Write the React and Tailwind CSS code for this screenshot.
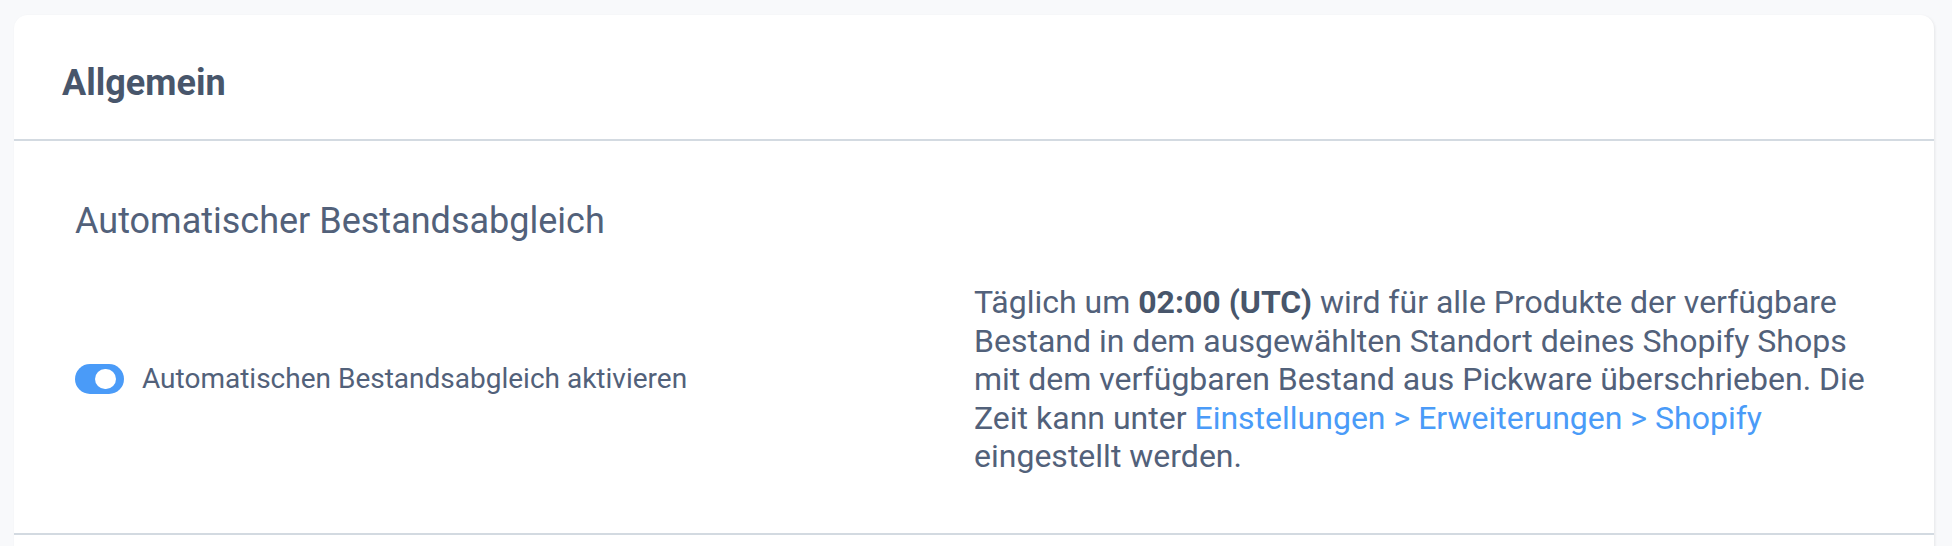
import React, { useState } from "react";

function Toggle({ checked, onChange }) {
  return (
    <button
      type="button"
      onClick={() => onChange(!checked)}
      className={
        checked
          ? "flex h-[30px] w-[49px] shrink-0 items-center justify-end rounded-full bg-[#4a9bf8] pr-[8px]"
          : "flex h-[30px] w-[49px] shrink-0 items-center justify-start rounded-full bg-[#cbd5e0] pl-[8px]"
      }
    >
      <span className="block h-[20px] w-[21px] rounded-full bg-white" />
    </button>
  );
}

export default function App() {
  const [autoSync, setAutoSync] = useState(true);

  return (
    <div
      className="min-h-screen bg-[#f8f9fb] pl-[14px] pr-[18px] pt-[15px] text-[#52617a]"
      style={{ fontFamily: "Roboto, 'Liberation Sans', sans-serif" }}
    >
      <div className="rounded-t-[14px] bg-white shadow-[1px_1px_3px_rgba(0,0,0,0.08)]">
        <div className="border-b-2 border-[#d3dae1] px-[48px] pb-[34px] pt-[47px]">
          <h2 className="text-[36px] font-bold leading-[43px] text-[#48566b]">Allgemein</h2>
        </div>

        <div className="border-b-2 border-[#d3dae1] px-[61px] pb-[57px] pt-[59px]">
          <h3 className="text-[36px] leading-[43px] text-[#52617a]">Automatischer Bestandsabgleich</h3>

          <div className="mt-[40px] grid grid-cols-2 items-center">
            <label className="flex items-center gap-[18px]">
              <Toggle checked={autoSync} onChange={setAutoSync} />
              <span className="text-[28px] leading-[34px]">Automatischen Bestandsabgleich aktivieren</span>
            </label>

            <p className="text-[32px] leading-[38.5px]">
              Täglich um <strong className="font-bold text-[#48566b]">02:00 (UTC)</strong> wird für alle Produkte der
              verfügbare Bestand in dem ausgewählten Standort deines Shopify Shops mit dem verfügbaren Bestand aus
              Pickware überschrieben. Die Zeit kann unter{" "}
              <a href="#" className="text-[#4a9bf8]">
                Einstellungen &gt; Erweiterungen &gt; Shopify
              </a>{" "}
              eingestellt werden.
            </p>
          </div>
        </div>

        <div className="h-[40px]" />
      </div>
    </div>
  );
}
